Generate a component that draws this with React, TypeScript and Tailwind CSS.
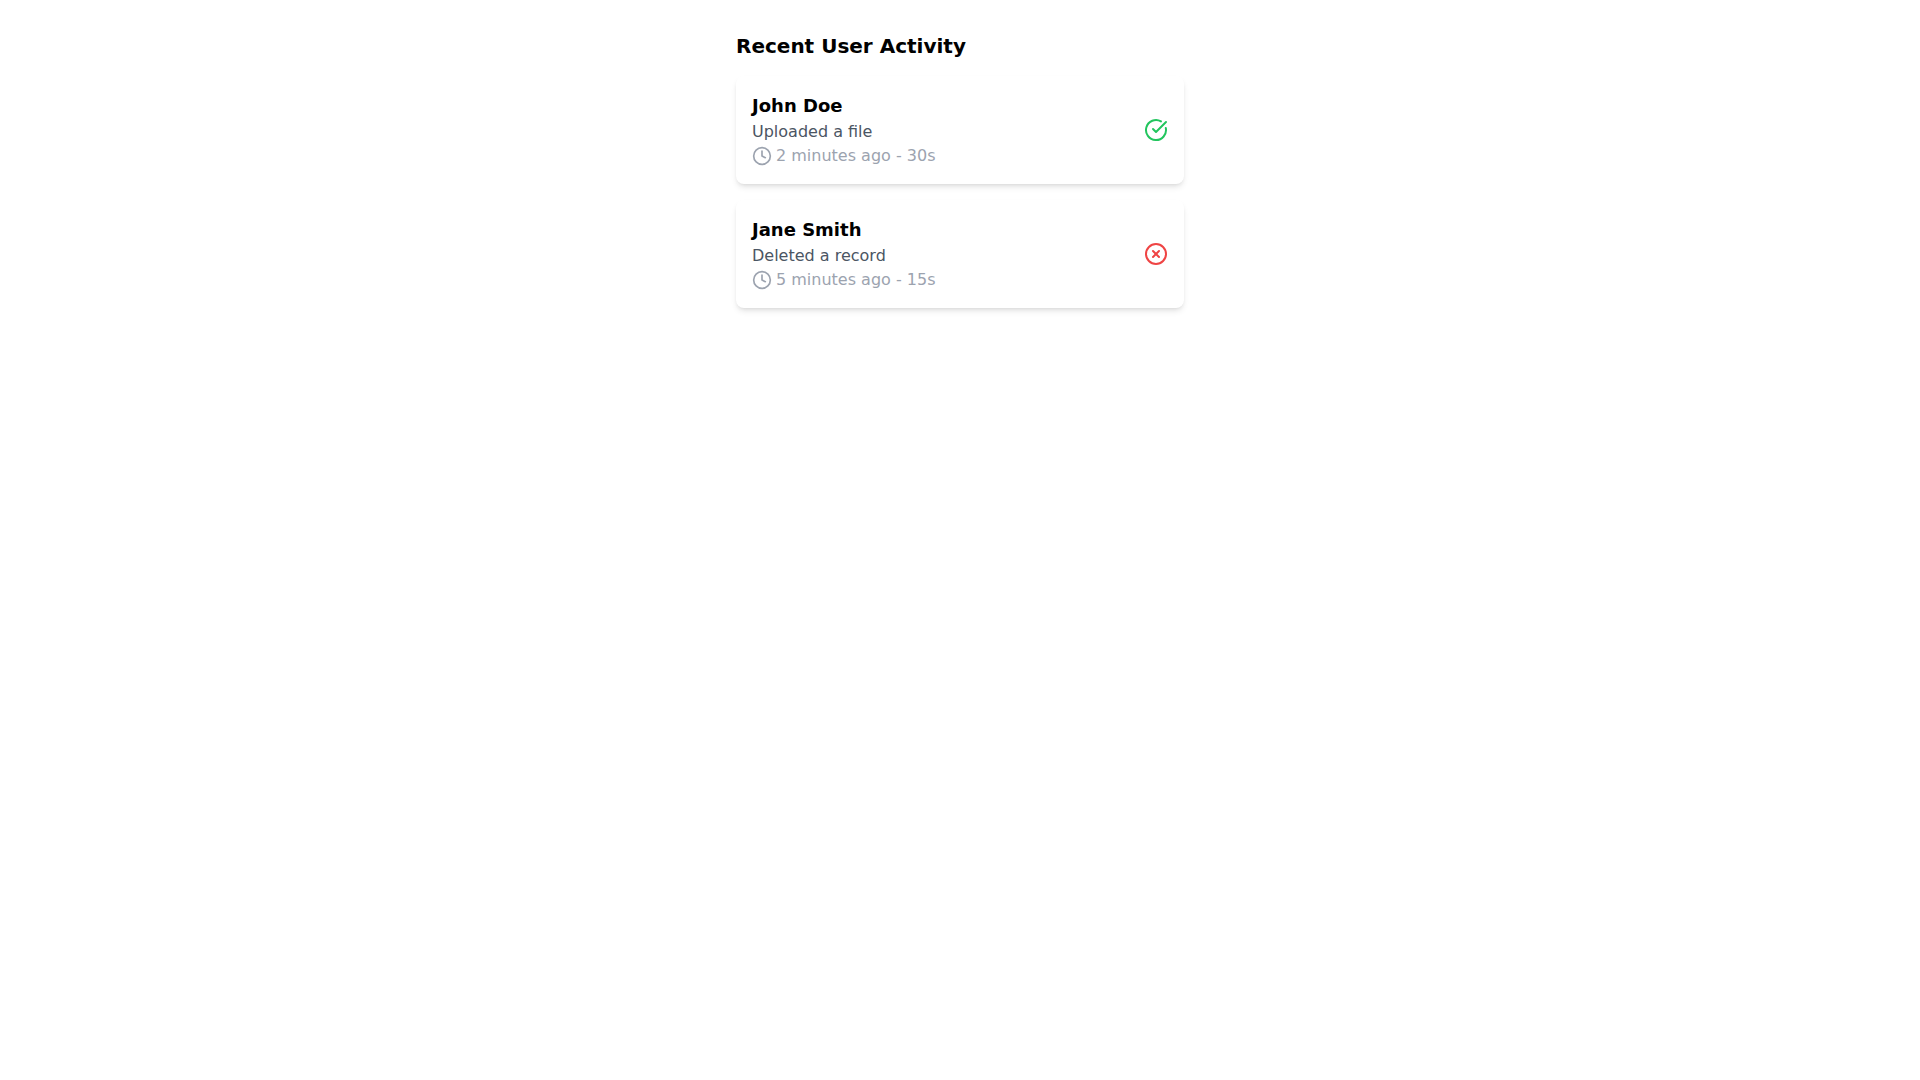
import { CheckCircle, Clock, XCircle } from "lucide-react";

const activities = [
  { id: 1, name: "John Doe", action: "Uploaded a file", time: "2 minutes ago - 30s", ok: true },
  { id: 2, name: "Jane Smith", action: "Deleted a record", time: "5 minutes ago - 15s", ok: false },
];

export default function App() {
  return (
    <div className="min-h-screen bg-white font-['DejaVu_Sans',sans-serif]">
      <div className="mx-auto w-[448px] pt-8">
        <h2 className="mb-4 text-xl font-bold text-black">Recent User Activity</h2>
        <ul className="space-y-4">
          {activities.map((item) => (
            <li key={item.id} className="flex items-center justify-between rounded-lg bg-white p-4 shadow-md">
              <div>
                <p className="text-lg font-bold text-black leading-7">{item.name}</p>
                <p className="text-base text-[#4b5563] leading-6">{item.action}</p>
                <p className="flex items-center text-base text-[#9ca3af] leading-6">
                  <Clock className="mr-1 h-5 w-5" />
                  {item.time}
                </p>
              </div>
              {item.ok ? (
                <CheckCircle className="h-6 w-6 text-[#22c55e]" />
              ) : (
                <XCircle className="h-6 w-6 text-[#ef4444]" />
              )}
            </li>
          ))}
        </ul>
      </div>
    </div>
  );
}
